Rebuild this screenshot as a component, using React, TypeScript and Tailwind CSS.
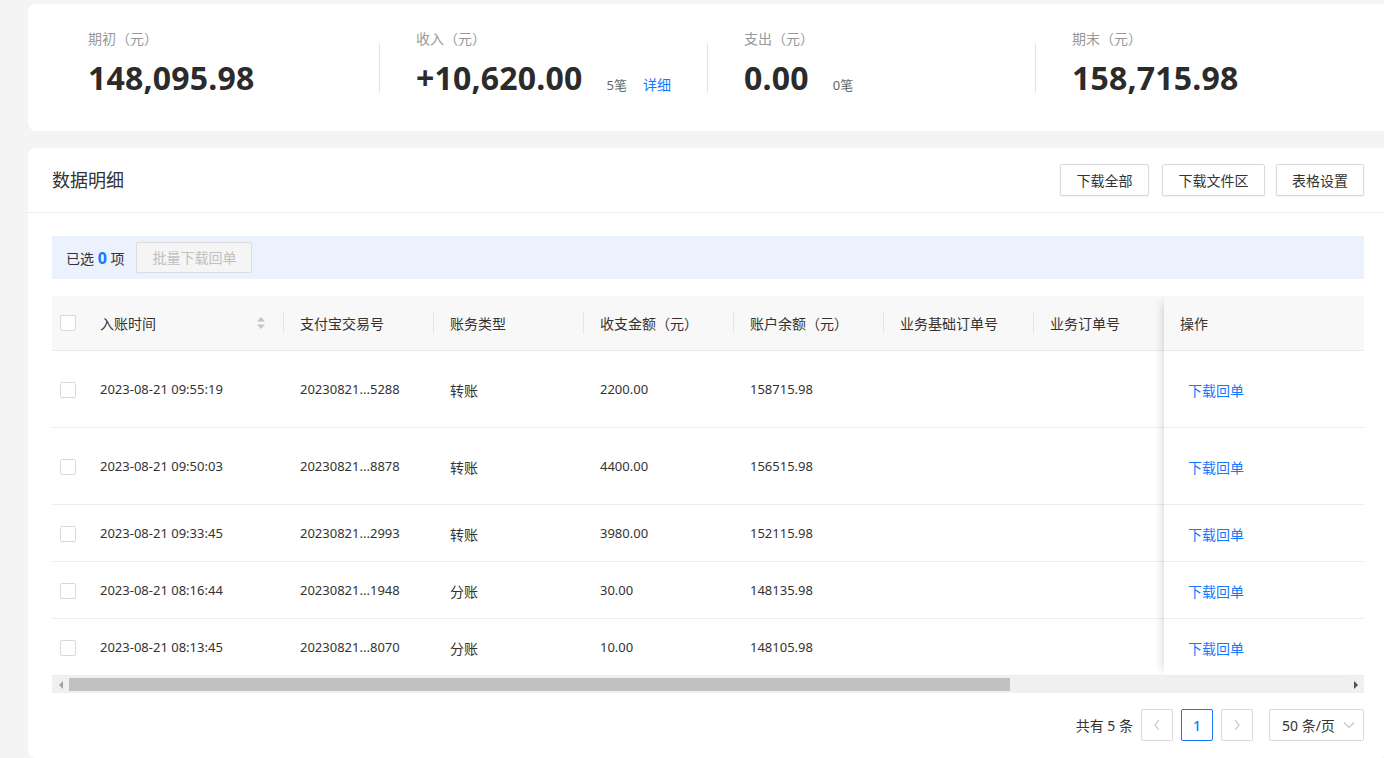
import React, { FC } from "react";

const FONT = { fontFamily: '"Noto Sans", "Noto Sans CJK SC", sans-serif' };

const summary = [
  { label: "期初（元）", value: "148,095.98" },
  { label: "收入（元）", value: "+10,620.00", count: "5笔", link: "详细" },
  { label: "支出（元）", value: "0.00", count: "0笔" },
  { label: "期末（元）", value: "158,715.98" },
];

const columns = [
  { title: "支付宝交易号", key: "tradeNo" },
  { title: "账务类型", key: "type" },
  { title: "收支金额（元）", key: "amount" },
  { title: "账户余额（元）", key: "balance" },
  { title: "业务基础订单号", key: "baseOrder" },
  { title: "业务订单号", key: "order" },
];

const rows = [
  { time: "2023-08-21 09:55:19", tradeNo: "20230821...5288", type: "转账", amount: "2200.00", balance: "158715.98", h: "h-[77px]" },
  { time: "2023-08-21 09:50:03", tradeNo: "20230821...8878", type: "转账", amount: "4400.00", balance: "156515.98", h: "h-[77px]" },
  { time: "2023-08-21 09:33:45", tradeNo: "20230821...2993", type: "转账", amount: "3980.00", balance: "152115.98", h: "h-[57px]" },
  { time: "2023-08-21 08:16:44", tradeNo: "20230821...1948", type: "分账", amount: "30.00", balance: "148135.98", h: "h-[57px]" },
  { time: "2023-08-21 08:13:45", tradeNo: "20230821...8070", type: "分账", amount: "10.00", balance: "148105.98", h: "h-[57px]" },
];

const Checkbox: FC = () => (
  <div className="w-4 h-4 border border-[#d9d9d9] rounded-[2px] bg-white" />
);

const HeadDivider: FC = () => <div className="w-px h-[22px] bg-[#e6e6e6]" />;

const App: FC = () => {
  return (
    <div className="w-[1384px] h-[758px] overflow-hidden bg-[#f4f4f4] pl-[28px] pt-[4px] text-[#333]" style={FONT}>
      {/* summary card */}
      <div className="w-[1360px] h-[127px] bg-white rounded-lg flex pl-[23px] pt-[25px]">
        {summary.map((s, i) => (
          <div key={s.label} className="w-[328px] flex">
            <div className={`w-px h-[50px] mt-[14px] ${i === 0 ? "bg-transparent" : "bg-[#e3e3e3]"}`} />
            <div className="pl-[36px]">
              <div className="text-[14px] leading-5 text-[#999]">{s.label}</div>
              <div className="flex items-baseline mt-[9px]">
                <span className="text-[32px] leading-10 font-bold text-[#2b2b2b] tracking-[0.2px]">{s.value}</span>
                {s.count && <span className="ml-[24px] text-[13px] text-[#666]">{s.count}</span>}
                {s.link && <span className="ml-[16px] text-[14px] text-[#1677ff]">{s.link}</span>}
              </div>
            </div>
          </div>
        ))}
      </div>

      {/* detail card */}
      <div className="w-[1360px] h-[610px] bg-white rounded-lg mt-[17px]">
        <div className="h-[65px] flex items-center justify-between px-6 border-b border-[#ececec]">
          <div className="text-[18px] text-[#333]">数据明细</div>
          <div className="flex items-center">
            <button className="h-[32px] w-[89px] border border-[#d9d9d9] rounded-[2px] bg-white text-[14px] text-[#333] shadow-[0_1px_2px_rgba(0,0,0,0.06)]">
              下载全部
            </button>
            <button className="ml-[13px] h-[32px] w-[103px] border border-[#d9d9d9] rounded-[2px] bg-white text-[14px] text-[#333] shadow-[0_1px_2px_rgba(0,0,0,0.06)]">
              下载文件区
            </button>
            <button className="ml-[11px] h-[32px] w-[88px] border border-[#d9d9d9] rounded-[2px] bg-white text-[14px] text-[#333] shadow-[0_1px_2px_rgba(0,0,0,0.06)]">
              表格设置
            </button>
          </div>
        </div>

        <div className="px-6">
          {/* selection bar */}
          <div className="mt-[23px] h-[43px] bg-[#ebf2fd] flex items-center pl-[14px]">
            <span className="text-[14px] text-[#333]">
              已选 <span className="font-bold text-[#1677ff] text-[16px]">0</span> 项
            </span>
            <button className="ml-[12px] h-[31px] w-[116px] border border-[#dcdcdc] rounded-[2px] bg-[#f5f5f5] text-[14px] text-[#c0c0c0]">
              批量下载回单
            </button>
          </div>

          {/* table */}
          <div className="mt-[17px] flex">
            <div className="w-[1112px] overflow-hidden">
              <div className="w-[1112px] h-[55px] bg-[#f8f8f8] border-b border-[#ebebeb] flex items-center text-[14px] text-[#333]">
                <div className="w-[32px] pl-[8px] shrink-0">
                  <Checkbox />
                </div>
                <div className="w-[200px] shrink-0 flex items-center">
                  <span className="pl-[16px] flex-1">入账时间</span>
                  <svg width="10" height="14" viewBox="0 0 10 14" className="mr-[17px]">
                    <path d="M5 1 L9 5.5 H1 Z" fill="#c4c4c4" />
                    <path d="M5 13 L9 8.5 H1 Z" fill="#c4c4c4" />
                  </svg>
                  <HeadDivider />
                </div>
                {columns.map((c, i) => (
                  <div key={c.key} className="w-[150px] shrink-0 flex items-center">
                    <span className="pl-[16px] flex-1">{c.title}</span>
                    {i < columns.length - 1 && <HeadDivider />}
                  </div>
                ))}
              </div>
              {rows.map((r) => (
                <div key={r.tradeNo} className={`${r.h} border-b border-[#ececec] flex items-center text-[13px] text-[#333] pt-[2px]`}>
                  <div className="w-[32px] pl-[8px] shrink-0">
                    <Checkbox />
                  </div>
                  <div className="w-[200px] shrink-0 pl-[16px]">{r.time}</div>
                  <div className="w-[150px] shrink-0 pl-[16px]">{r.tradeNo}</div>
                  <div className="w-[150px] shrink-0 pl-[16px] text-[14px]">{r.type}</div>
                  <div className="w-[150px] shrink-0 pl-[16px]">{r.amount}</div>
                  <div className="w-[150px] shrink-0 pl-[16px]">{r.balance}</div>
                  <div className="w-[150px] shrink-0" />
                  <div className="w-[150px] shrink-0" />
                </div>
              ))}
            </div>
            <div className="w-[200px] relative z-10 bg-white shadow-[-8px_0_8px_-6px_rgba(0,0,0,0.14)]">
              <div className="h-[55px] bg-[#f8f8f8] border-b border-[#ebebeb] flex items-center pl-[16px] text-[14px] text-[#333]">
                操作
              </div>
              {rows.map((r) => (
                <div key={r.tradeNo} className={`${r.h} border-b border-[#ececec] flex items-center pl-[24px] pt-[2px] text-[14px] text-[#1677ff]`}>
                  下载回单
                </div>
              ))}
            </div>
          </div>

          {/* horizontal scrollbar */}
          <div className="h-[17px] bg-[#f0f0f0] flex items-center">
            <div className="w-[17px] flex justify-center">
              <svg width="6" height="8" viewBox="0 0 6 8">
                <path d="M5 0 V8 L1 4 Z" fill="#a3a3a3" />
              </svg>
            </div>
            <div className="w-[941px] h-[13px] bg-[#c1c1c1]" />
            <div className="flex-1" />
            <div className="w-[17px] flex justify-center">
              <svg width="6" height="8" viewBox="0 0 6 8">
                <path d="M1 0 V8 L5 4 Z" fill="#505050" />
              </svg>
            </div>
          </div>

          {/* pagination */}
          <div className="mt-[16px] flex items-center justify-end text-[14px] text-[#333]">
            <span className="mr-[8px]">共有 5 条</span>
            <div className="w-[32px] h-[32px] border border-[#d9d9d9] rounded-[2px] flex items-center justify-center">
              <svg width="8" height="12" viewBox="0 0 8 12">
                <path d="M6 1 L2 6 L6 11" stroke="#c6c6c6" strokeWidth="1.2" fill="none" />
              </svg>
            </div>
            <div className="ml-[8px] w-[32px] h-[32px] border border-[#1677ff] rounded-[2px] flex items-center justify-center text-[#1677ff] font-medium">
              1
            </div>
            <div className="ml-[8px] w-[32px] h-[32px] border border-[#d9d9d9] rounded-[2px] flex items-center justify-center">
              <svg width="8" height="12" viewBox="0 0 8 12">
                <path d="M2 1 L6 6 L2 11" stroke="#c6c6c6" strokeWidth="1.2" fill="none" />
              </svg>
            </div>
            <div className="ml-[16px] w-[95px] h-[32px] border border-[#d9d9d9] rounded-[2px] flex items-center justify-between pl-[12px] pr-[8px]">
              <span>50 条/页</span>
              <svg width="12" height="8" viewBox="0 0 12 8">
                <path d="M1 1.5 L6 6.5 L11 1.5" stroke="#c6c6c6" strokeWidth="1.2" fill="none" />
              </svg>
            </div>
          </div>
        </div>
      </div>
    </div>
  );
};

export default App;
